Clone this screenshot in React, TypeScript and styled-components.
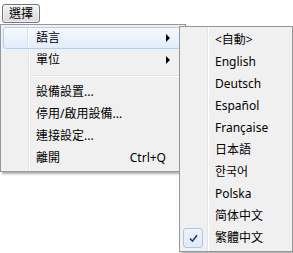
import styled, { createGlobalStyle } from "styled-components";

const GlobalStyle = createGlobalStyle`
    body {
        margin: 0;
        background: #fff;
    }
`;

const Screen = styled.div`
    position: relative;
    width: 293px;
    height: 253px;
    overflow: hidden;
    background: #fff;
    font-family: "Noto Sans", "Noto Sans CJK TC", sans-serif;
    font-size: 12px;
    color: #000;
`;

const MenuBar = styled.div`
    display: flex;
    align-items: flex-start;
    height: 24px;
    padding: 4px 0 0 2px;
    box-sizing: border-box;
`;

const MenuButton = styled.div`
    display: flex;
    align-items: center;
    justify-content: center;
    width: 38px;
    height: 19px;
    box-sizing: border-box;
    border: 1px solid #767676;
    border-radius: 3px;
    background: linear-gradient(#f4f4f4, #e6e7ea 50%, #d7dae0);
    box-shadow: inset 0 0 0 1px rgba(255, 255, 255, 0.55);
    line-height: 1;
`;

const Menu = styled.div<{ $left: number; $top: number; $width: number }>`
    position: absolute;
    left: ${(p) => p.$left}px;
    top: ${(p) => p.$top}px;
    width: ${(p) => p.$width}px;
    box-sizing: border-box;
    padding: 2px;
    border: 1px solid #979797;
    background: linear-gradient(
            to right,
            transparent 27px,
            #e2e3e3 27px 28px,
            #fff 28px 29px,
            transparent 29px
        ),
        #f0f0f0;
    box-shadow: 2px 2px 2px rgba(0, 0, 0, 0.32);
`;

const Item = styled.div<{ $active?: boolean }>`
    display: grid;
    grid-template-columns: 32px 1fr auto 4px;
    align-items: center;
    height: 22px;
    box-sizing: border-box;
    padding-right: 12px;
    border: 1px solid ${(p) => (p.$active ? "#aecff7" : "transparent")};
    border-radius: 3px;
    white-space: nowrap;
    line-height: 1;
    background: ${(p) =>
        p.$active
            ? `linear-gradient(to right, transparent 23px, #d3dff0 23px 24px, #fff 24px 25px, transparent 25px),
               linear-gradient(#f6f9fe, #e2edfc)`
            : "transparent"};
`;

const IconCell = styled.div`
    display: flex;
    align-items: center;
    height: 100%;
`;

const Label = styled.span``;

const Shortcut = styled.span`
    padding-left: 20px;
`;

const Arrow = styled.span`
    width: 0;
    height: 0;
    border-left: 4px solid #000;
    border-top: 4px solid transparent;
    border-bottom: 4px solid transparent;
`;

const Separator = styled.div`
    height: 10px;
    display: flex;
    align-items: center;
    padding-left: 29px;
    &::after {
        content: "";
        flex: 1;
        border-top: 1px solid #e0e0e0;
        border-bottom: 1px solid #fff;
    }
`;

const CheckBox = styled.div`
    display: flex;
    align-items: center;
    justify-content: center;
    width: 20px;
    height: 20px;
    box-sizing: border-box;
    border: 1px solid #a8c8ee;
    border-radius: 3px;
    background: linear-gradient(#eef4fc, #dfe9f8);
`;

const languages = [
    "<自動>",
    "English",
    "Deutsch",
    "Español",
    "Française",
    "日本語",
    "한국어",
    "Polska",
    "简体中文",
    "繁體中文",
];

function MenuRow({
    label,
    active,
    shortcut,
    submenu,
    checked,
}: {
    label: string;
    active?: boolean;
    shortcut?: string;
    submenu?: boolean;
    checked?: boolean;
}) {
    return (
        <Item $active={active}>
            <IconCell>
                {checked && (
                    <CheckBox>
                        <svg width="9" height="9" viewBox="0 0 9 9">
                            <path
                                d="M1 4.6 L3.4 7.2 L8 1.2"
                                fill="none"
                                stroke="#1d2f80"
                                strokeWidth="1.5"
                            />
                        </svg>
                    </CheckBox>
                )}
            </IconCell>
            <Label>{label}</Label>
            {shortcut ? <Shortcut>{shortcut}</Shortcut> : <span />}
            {submenu ? <Arrow /> : <span />}
        </Item>
    );
}

function App() {
    return (
        <Screen>
            <GlobalStyle />
            <MenuBar>
                <MenuButton>選擇</MenuButton>
            </MenuBar>
            <Menu $left={0} $top={24} $width={186}>
                <MenuRow label="語言" active submenu />
                <MenuRow label="單位" submenu />
                <Separator />
                <MenuRow label="設備設置..." />
                <MenuRow label="停用/啟用設備..." />
                <MenuRow label="連接設定..." />
                <MenuRow label="離開" shortcut="Ctrl+Q" />
            </Menu>
            <Menu $left={179} $top={26} $width={114}>
                {languages.map((lang) => (
                    <MenuRow key={lang} label={lang} checked={lang === "繁體中文"} />
                ))}
            </Menu>
        </Screen>
    );
}

export default App;
